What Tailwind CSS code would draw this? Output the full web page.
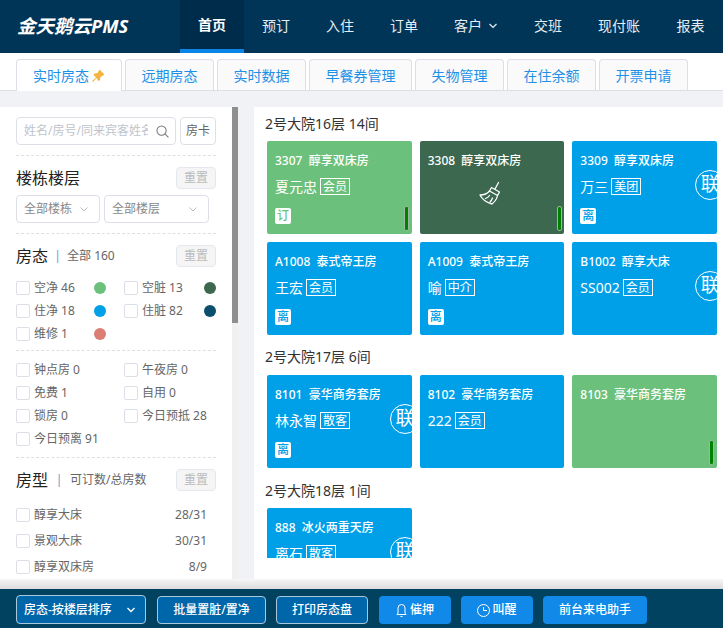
<!DOCTYPE html>
<html lang="zh">
<head>
    <meta charset="UTF-8">
    <title>金天鹅云PMS</title>
    <script src="https://cdn.jsdelivr.net/npm/@tailwindcss/browser@4"></script>
</head>
<body class="h-[628px] w-[723px] overflow-hidden flex flex-col bg-[#f0f2f5] text-[12px] text-[#666] font-['Noto_Sans','Noto_Sans_CJK_SC',sans-serif]">
    <!-- top nav -->
    <header class="h-[53px] shrink-0 flex bg-[#003558] text-[#e8edf1] text-[14px] overflow-hidden">
        <div class="w-[180px] pl-[17px] pt-[13px] text-[18.500px] leading-[26px] font-bold italic text-white whitespace-nowrap">金天鹅云PMS</div>
        <div class="w-[64px] h-full flex items-center justify-center bg-[#002c4b] border-b-[4px] border-[#0a84e6] text-white font-bold">首页</div>
        <div class="w-[64px] flex items-center justify-center pb-[2px]">预订</div>
        <div class="w-[64px] flex items-center justify-center pb-[2px]">入住</div>
        <div class="w-[64px] flex items-center justify-center pb-[2px]">订单</div>
        <div class="w-[80px] flex items-center pl-[18px] gap-[7px] pb-[2px]">客户
            <svg class="w-[8px] h-[6px]" viewBox="0 0 8 6" fill="none" stroke="#e8edf1" stroke-width="1.200"><path d="M.5 1L4 4.500 7.500 1"/></svg>
        </div>
        <div class="w-[64px] flex items-center justify-center pb-[2px]">交班</div>
        <div class="w-[78px] flex items-center justify-center pb-[2px]">现付账</div>
        <div class="w-[65px] flex items-center justify-center pb-[2px]">报表</div>
    </header>

    <!-- tabs -->
    <nav class="h-[38px] shrink-0 flex items-end gap-[3px] pl-[16px] bg-white border-b border-[#dcdfe6] text-[#1e91e6] text-[14px]">
        <div class="w-[106px] h-[32px] -mb-px flex items-center justify-center gap-[2px] bg-white border border-b-0 border-[#dcdfe6] rounded-t-[4px]">实时房态
            <svg class="w-[14px] h-[14px]" viewBox="0 0 14 14" fill="#f5b342"><path d="M8.500.500l5 5-1.500 1-2.500 1.500-.5 3-1.500 1L5.500 9 2 13 1 12l4-3.500L2.500 6l1-1.500 3-.5L8 1.500z"/></svg>
        </div>
        <div class="w-[89px] h-[31px] flex items-center justify-center bg-[#fafafa] border border-b-0 border-[#dcdfe6] rounded-t-[4px]">远期房态</div>
        <div class="w-[89px] h-[31px] flex items-center justify-center bg-[#fafafa] border border-b-0 border-[#dcdfe6] rounded-t-[4px]">实时数据</div>
        <div class="w-[103px] h-[31px] flex items-center justify-center bg-[#fafafa] border border-b-0 border-[#dcdfe6] rounded-t-[4px]">早餐券管理</div>
        <div class="w-[89px] h-[31px] flex items-center justify-center bg-[#fafafa] border border-b-0 border-[#dcdfe6] rounded-t-[4px]">失物管理</div>
        <div class="w-[89px] h-[31px] flex items-center justify-center bg-[#fafafa] border border-b-0 border-[#dcdfe6] rounded-t-[4px]">在住余额</div>
        <div class="w-[89px] h-[31px] flex items-center justify-center bg-[#fafafa] border border-b-0 border-[#dcdfe6] rounded-t-[4px]">开票申请</div>
    </nav>

    <div class="h-[488px] shrink-0 flex pt-[16px]">
        <!-- left filters -->
        <aside class="w-[238px] shrink-0 h-[472px] relative bg-white overflow-hidden">
            <div class="absolute right-0 top-0 w-[6px] h-full bg-[#f0f0f0]"><div class="h-[216px] bg-[#8f8f8f]"></div></div>
            <div class="w-[200px] ml-[16px]">
                <div class="h-[49px] pt-[10px] flex gap-[4px] border-b border-dashed border-[#dcdfe6]">
                    <div class="w-[160px] h-[28px] flex items-center justify-between pl-[7px] pr-[6px] border border-[#dcdfe6] rounded-[4px] text-[#c0c4cc]">
                        <span class="w-[124px] overflow-hidden whitespace-nowrap">姓名/房号/同来宾客姓名</span>
                        <svg class="w-[13px] h-[13px] shrink-0" viewBox="0 0 14 14" fill="none" stroke="#777" stroke-width="1.100"><circle cx="6" cy="6" r="5"/><path d="M9.600 9.600l3.800 3.800"/></svg>
                    </div>
                    <div class="w-[36px] h-[28px] flex items-center justify-center border border-[#dcdfe6] rounded-[4px] text-[#666]">房卡</div>
                </div>

                <div class="h-[78px] pt-[11px] border-b border-dashed border-[#dcdfe6]">
                    <div class="flex justify-between items-center h-[22px]">
                        <span class="text-[16px] text-[#222]">楼栋楼层</span>
                        <span class="w-[40px] h-[22px] flex items-center justify-center bg-[#f5f5f5] border border-[#e4e7ed] rounded-[4px] text-[#bbb]">重置</span>
                    </div>
                    <div class="mt-[6px] flex gap-[4px] text-[#888]">
                        <div class="w-[84px] h-[28px] flex items-center justify-between pl-[7px] pr-[11px] border border-[#dcdfe6] rounded-[4px]">全部楼栋
                            <svg class="w-[8px] h-[5px]" viewBox="0 0 8 5" fill="none" stroke="#bbb"><path d="M.5.500L4 4 7.500.500"/></svg>
                        </div>
                        <div class="w-[105px] h-[28px] flex items-center justify-between pl-[7px] pr-[11px] border border-[#dcdfe6] rounded-[4px]">全部楼层
                            <svg class="w-[8px] h-[5px]" viewBox="0 0 8 5" fill="none" stroke="#bbb"><path d="M.5.500L4 4 7.500.500"/></svg>
                        </div>
                    </div>
                </div>

                <div class="h-[117px] pt-[11px] border-b border-dashed border-[#dcdfe6]">
                    <div class="flex items-center h-[22px]">
                        <span class="text-[16px] text-[#222]">房态</span>
                        <span class="w-[19px] text-center text-[#5b9bd5]">|</span>
                        <span>全部 160</span>
                        <span class="ml-auto w-[40px] h-[22px] flex items-center justify-center bg-[#f5f5f5] border border-[#e4e7ed] rounded-[4px] text-[#bbb]">重置</span>
                    </div>
                    <div class="mt-[14px] grid grid-cols-[90px_92px] gap-x-[18px] gap-y-[9px]">
                        <label class="h-[14px] flex items-center gap-[4px]"><i class="w-[14px] h-[14px] border border-[#dcdfe6] rounded-[2px]"></i>空净 46<i class="ml-auto w-[12px] h-[12px] rounded-full bg-[#6bc17b]"></i></label>
                        <label class="h-[14px] flex items-center gap-[4px]"><i class="w-[14px] h-[14px] border border-[#dcdfe6] rounded-[2px]"></i>空脏 13<i class="ml-auto w-[12px] h-[12px] rounded-full bg-[#3b684e]"></i></label>
                        <label class="h-[14px] flex items-center gap-[4px]"><i class="w-[14px] h-[14px] border border-[#dcdfe6] rounded-[2px]"></i>住净 18<i class="ml-auto w-[12px] h-[12px] rounded-full bg-[#00a0e9]"></i></label>
                        <label class="h-[14px] flex items-center gap-[4px]"><i class="w-[14px] h-[14px] border border-[#dcdfe6] rounded-[2px]"></i>住脏 82<i class="ml-auto w-[12px] h-[12px] rounded-full bg-[#0b4f6c]"></i></label>
                        <label class="h-[14px] flex items-center gap-[4px]"><i class="w-[14px] h-[14px] border border-[#dcdfe6] rounded-[2px]"></i>维修 1<i class="ml-auto w-[12px] h-[12px] rounded-full bg-[#dc7e74]"></i></label>
                    </div>
                </div>

                <div class="h-[107px] pt-[12px] border-b border-dashed border-[#dcdfe6]">
                    <div class="grid grid-cols-[90px_92px] gap-x-[18px] gap-y-[9px]">
                        <label class="h-[14px] flex items-center gap-[4px]"><i class="w-[14px] h-[14px] border border-[#dcdfe6] rounded-[2px]"></i>钟点房 0</label>
                        <label class="h-[14px] flex items-center gap-[4px]"><i class="w-[14px] h-[14px] border border-[#dcdfe6] rounded-[2px]"></i>午夜房 0</label>
                        <label class="h-[14px] flex items-center gap-[4px]"><i class="w-[14px] h-[14px] border border-[#dcdfe6] rounded-[2px]"></i>免费 1</label>
                        <label class="h-[14px] flex items-center gap-[4px]"><i class="w-[14px] h-[14px] border border-[#dcdfe6] rounded-[2px]"></i>自用 0</label>
                        <label class="h-[14px] flex items-center gap-[4px]"><i class="w-[14px] h-[14px] border border-[#dcdfe6] rounded-[2px]"></i>锁房 0</label>
                        <label class="h-[14px] flex items-center gap-[4px]"><i class="w-[14px] h-[14px] border border-[#dcdfe6] rounded-[2px]"></i>今日预抵 28</label>
                        <label class="h-[14px] flex items-center gap-[4px] whitespace-nowrap"><i class="w-[14px] h-[14px] border border-[#dcdfe6] rounded-[2px]"></i>今日预离 91</label>
                    </div>
                </div>

                <div class="pt-[11px]">
                    <div class="flex items-center h-[22px]">
                        <span class="text-[16px] text-[#222]">房型</span>
                        <span class="w-[22px] text-center text-[#5b9bd5]">|</span>
                        <span>可订数/总房数</span>
                        <span class="ml-auto w-[40px] h-[22px] flex items-center justify-center bg-[#f5f5f5] border border-[#e4e7ed] rounded-[4px] text-[#bbb]">重置</span>
                    </div>
                    <div class="mt-[17px] flex flex-col gap-[12px] pr-[9px]">
                        <label class="h-[14px] flex items-center gap-[4px]"><i class="w-[14px] h-[14px] border border-[#dcdfe6] rounded-[2px]"></i>醇享大床<span class="ml-auto">28/31</span></label>
                        <label class="h-[14px] flex items-center gap-[4px]"><i class="w-[14px] h-[14px] border border-[#dcdfe6] rounded-[2px]"></i>景观大床<span class="ml-auto">30/31</span></label>
                        <label class="h-[14px] flex items-center gap-[4px]"><i class="w-[14px] h-[14px] border border-[#dcdfe6] rounded-[2px]"></i>醇享双床房<span class="ml-auto">8/9</span></label>
                    </div>
                </div>
            </div>
        </aside>

        <!-- room board -->
        <main class="ml-[16px] flex-1 h-[472px] bg-white pl-[11px] text-white">
            <div class="h-[451px] overflow-hidden pt-[7px]">
                <h2 class="h-[20px] text-[14px] leading-[20px] text-[#333]">2号大院16层 14间</h2>
                <div class="mt-[7px] ml-[2px] w-[450px] grid grid-cols-3 gap-[8px] auto-rows-[93px]">
                    <div class="relative overflow-hidden rounded-[2px] bg-[#6bc17b] pl-[8px] pt-[11px] font-medium">
                        <div class="leading-[18px] whitespace-nowrap">3307&nbsp; 醇享双床房</div>
                        <div class="mt-[6px] h-[20px] flex items-center gap-[3px] text-[14px] font-normal">夏元忠<span class="h-[17px] px-[2px] border border-white text-[12px] leading-[15px]">会员</span></div>
                        <span class="absolute left-[8px] top-[67px] w-[16px] h-[16px] rounded-[2px] bg-white text-[#6bc17b] text-[12px] leading-[16px] text-center">订</span>
                        <i class="absolute left-[137px] top-[65px] w-[5px] h-[25px] rounded-[2px] bg-[#008000] border border-[#9ab89f]"></i>
                    </div>
                    <div class="relative overflow-hidden rounded-[2px] bg-[#3b684e] pl-[8px] pt-[11px] font-medium">
                        <div class="leading-[18px] whitespace-nowrap">3308&nbsp; 醇享双床房</div>
                        <svg class="absolute left-[58px] top-[40px] w-[24px] h-[24px]" viewBox="0 0 24 24" fill="none" stroke="#fff" stroke-width="1.300" stroke-linejoin="round" stroke-linecap="round"><path d="M20.500 1.500l-3.500 6.500"/><path d="M13.500 6.500l8 4.500-2 3.500-8-4.500z"/><path d="M11.500 10c-2 2.500-5 4-9.500 4 2 4 6.500 7.500 12 9 3-2.500 5-5.500 5.500-8.500"/><path d="M7.500 17.500c1.500-.5 3-1.500 4-3M12 21c1-1 2-2.500 2.500-4"/></svg>
                        <i class="absolute left-[137px] top-[65px] w-[5px] h-[25px] rounded-[2px] bg-[#008000] border border-[#9ab89f]"></i>
                    </div>
                    <div class="relative overflow-hidden rounded-[2px] bg-[#00a0e9] pl-[8px] pt-[11px] font-medium">
                        <div class="leading-[18px] whitespace-nowrap">3309&nbsp; 醇享双床房</div>
                        <div class="mt-[6px] h-[20px] flex items-center gap-[3px] text-[14px] font-normal">万三<span class="h-[17px] px-[2px] border border-white text-[12px] leading-[15px]">美团</span></div>
                        <span class="absolute left-[123px] top-[29px] w-[30px] h-[30px] rounded-full border border-white text-[19px] leading-[27px] text-center font-normal">联</span>
                        <span class="absolute left-[8px] top-[67px] w-[16px] h-[16px] rounded-[2px] bg-white text-[#00a0e9] text-[12px] leading-[16px] text-center">离</span>
                    </div>
                    <div class="relative overflow-hidden rounded-[2px] bg-[#00a0e9] pl-[8px] pt-[11px] font-medium">
                        <div class="leading-[18px] whitespace-nowrap">A1008&nbsp; 泰式帝王房</div>
                        <div class="mt-[6px] h-[20px] flex items-center gap-[3px] text-[14px] font-normal">王宏<span class="h-[17px] px-[2px] border border-white text-[12px] leading-[15px]">会员</span></div>
                        <span class="absolute left-[8px] top-[67px] w-[16px] h-[16px] rounded-[2px] bg-white text-[#00a0e9] text-[12px] leading-[16px] text-center">离</span>
                    </div>
                    <div class="relative overflow-hidden rounded-[2px] bg-[#00a0e9] pl-[8px] pt-[11px] font-medium">
                        <div class="leading-[18px] whitespace-nowrap">A1009&nbsp; 泰式帝王房</div>
                        <div class="mt-[6px] h-[20px] flex items-center gap-[3px] text-[14px] font-normal">喻<span class="h-[17px] px-[2px] border border-white text-[12px] leading-[15px]">中介</span></div>
                        <span class="absolute left-[8px] top-[67px] w-[16px] h-[16px] rounded-[2px] bg-white text-[#00a0e9] text-[12px] leading-[16px] text-center">离</span>
                    </div>
                    <div class="relative overflow-hidden rounded-[2px] bg-[#00a0e9] pl-[8px] pt-[11px] font-medium">
                        <div class="leading-[18px] whitespace-nowrap">B1002&nbsp; 醇享大床</div>
                        <div class="mt-[6px] h-[20px] flex items-center gap-[3px] text-[14px] font-normal">SS002<span class="h-[17px] px-[2px] border border-white text-[12px] leading-[15px]">会员</span></div>
                        <span class="absolute left-[123px] top-[29px] w-[30px] h-[30px] rounded-full border border-white text-[19px] leading-[27px] text-center font-normal">联</span>
                    </div>
                </div>

                <h2 class="mt-[12px] h-[20px] text-[14px] leading-[20px] text-[#333]">2号大院17层 6间</h2>
                <div class="mt-[8px] ml-[2px] w-[450px] grid grid-cols-3 gap-[8px] auto-rows-[93px]">
                    <div class="relative overflow-hidden rounded-[2px] bg-[#00a0e9] pl-[8px] pt-[11px] font-medium">
                        <div class="leading-[18px] whitespace-nowrap">8101&nbsp; 豪华商务套房</div>
                        <div class="mt-[6px] h-[20px] flex items-center gap-[3px] text-[14px] font-normal">林永智<span class="h-[17px] px-[2px] border border-white text-[12px] leading-[15px]">散客</span></div>
                        <span class="absolute left-[123px] top-[29px] w-[30px] h-[30px] rounded-full border border-white text-[19px] leading-[27px] text-center font-normal">联</span>
                        <span class="absolute left-[8px] top-[67px] w-[16px] h-[16px] rounded-[2px] bg-white text-[#00a0e9] text-[12px] leading-[16px] text-center">离</span>
                    </div>
                    <div class="relative overflow-hidden rounded-[2px] bg-[#00a0e9] pl-[8px] pt-[11px] font-medium">
                        <div class="leading-[18px] whitespace-nowrap">8102&nbsp; 豪华商务套房</div>
                        <div class="mt-[6px] h-[20px] flex items-center gap-[3px] text-[14px] font-normal">222<span class="h-[17px] px-[2px] border border-white text-[12px] leading-[15px]">会员</span></div>
                    </div>
                    <div class="relative overflow-hidden rounded-[2px] bg-[#6bc17b] pl-[8px] pt-[11px] font-medium">
                        <div class="leading-[18px] whitespace-nowrap">8103&nbsp; 豪华商务套房</div>
                        <i class="absolute left-[137px] top-[65px] w-[5px] h-[25px] rounded-[2px] bg-[#008000] border border-[#9ab89f]"></i>
                    </div>
                </div>

                <h2 class="mt-[13px] h-[20px] text-[14px] leading-[20px] text-[#333]">2号大院18层 1间</h2>
                <div class="mt-[7px] ml-[2px] w-[450px] grid grid-cols-3 gap-[8px] auto-rows-[93px]">
                    <div class="relative overflow-hidden rounded-[2px] bg-[#00a0e9] pl-[8px] pt-[11px] font-medium">
                        <div class="leading-[18px] whitespace-nowrap">888&nbsp; 冰火两重天房</div>
                        <div class="mt-[6px] h-[20px] flex items-center gap-[3px] text-[14px] font-normal">离石<span class="h-[17px] px-[2px] border border-white text-[12px] leading-[15px]">散客</span></div>
                        <span class="absolute left-[123px] top-[29px] w-[30px] h-[30px] rounded-full border border-white text-[19px] leading-[27px] text-center font-normal">联</span>
                    </div>
                </div>
            </div>
        </main>
    </div>

    <div class="h-[10px] shrink-0 bg-linear-to-b from-[#f6f6f6] to-[#dcdcdc]"></div>

    <!-- bottom action bar -->
    <footer class="h-[39px] shrink-0 flex items-start pt-[7px] pl-[16px] bg-[#00425f] text-white text-[12px] font-medium">
        <div class="-mt-px w-[130px] h-[29px] flex items-center justify-between pl-[7px] pr-[10px] bg-[#0066aa] border border-[#a9c8dc] rounded-[4px]">房态-按楼层排序
            <svg class="w-[8px] h-[6px]" viewBox="0 0 8 6" fill="none" stroke="#fff" stroke-width="1.300"><path d="M.5 1L4 4.500 7.500 1"/></svg>
        </div>
        <div class="ml-[11px] w-[109px] h-[28px] flex items-center justify-center bg-[#0066aa] border border-[#a9c8dc] rounded-[4px]">批量置脏/置净</div>
        <div class="ml-[10px] w-[92px] h-[28px] flex items-center justify-center bg-[#0066aa] border border-[#a9c8dc] rounded-[4px]">打印房态盘</div>
        <div class="ml-[11px] w-[72px] h-[28px] flex items-center justify-center gap-[3px] bg-[#1189e8] rounded-[4px]">
            <svg class="w-[11px] h-[14px]" viewBox="0 0 11 14" fill="none" stroke="#fff"><path d="M2 10.500V5a3.500 3.500 0 017 0v5.500l1.200 1H.8zM4.500 13.500h2"/></svg>催押
        </div>
        <div class="ml-[10px] w-[72px] h-[28px] flex items-center justify-center gap-[2px] bg-[#1189e8] rounded-[4px]">
            <svg class="w-[13px] h-[13px]" viewBox="0 0 13 13" fill="none" stroke="#fff"><circle cx="6.500" cy="6.500" r="6"/><path d="M6.500 3v3.500H10"/></svg>叫醒
        </div>
        <div class="ml-[10px] w-[104px] h-[28px] flex items-center justify-center bg-[#1189e8] rounded-[4px]">前台来电助手</div>
    </footer>
</body>
</html>
